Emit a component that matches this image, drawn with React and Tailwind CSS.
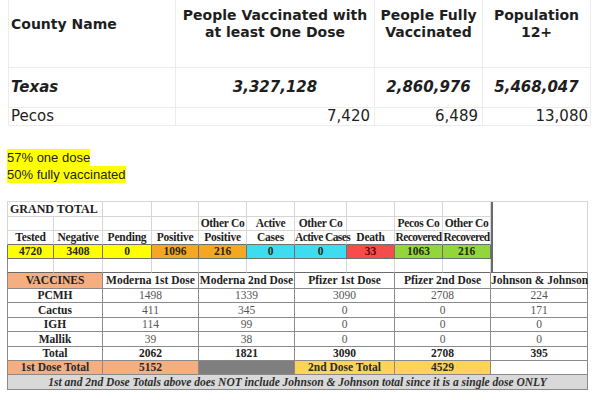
import React from "react";

const light = "border-r border-b border-[#d6d6d6]";
const dark = "border-r border-b border-[#707070]";
const vac = "border-r border-b border-[#8a8a8a]";

const statHeads = [
    ["", "Tested"],
    ["", "Negative"],
    ["", "Pending"],
    ["", "Positive"],
    ["Other Co", "Positive"],
    ["Active", "Cases"],
    ["Other Co", "Active Cases"],
    ["", "Death"],
    ["Pecos Co", "Recovered"],
    ["Other Co", "Recovered"],
];

const statValues = [
    { value: "4720", bg: "bg-[#ffff00]" },
    { value: "3408", bg: "bg-[#ffff00]" },
    { value: "0", bg: "bg-[#ffff00]" },
    { value: "1096", bg: "bg-[#f5a623]" },
    { value: "216", bg: "bg-[#f5a623]" },
    { value: "0", bg: "bg-[#3ddcf0]" },
    { value: "0", bg: "bg-[#3ddcf0]" },
    { value: "33", bg: "bg-[#f64c4c]" },
    { value: "1063", bg: "bg-[#92d63c]" },
    { value: "216", bg: "bg-[#92d63c]" },
];

const vaccineRows = [
    ["PCMH", "1498", "1339", "3090", "2708", "224"],
    ["Cactus", "411", "345", "0", "0", "171"],
    ["IGH", "114", "99", "0", "0", "0"],
    ["Mallik", "39", "38", "0", "0", "0"],
];

const colWidths = [47, 49, 49, 47, 48, 48, 52, 48, 48, 48, 48, 49];

const App = () => {
    return (
        <div className="w-[595px] h-[400px] bg-white overflow-hidden text-[#1e1e1e]">
            {/* county summary */}
            <table className="ml-[8px] w-[582px] table-fixed border-collapse font-['DejaVu_Sans',sans-serif]">
                <colgroup>
                    <col className="w-[167px]" />
                    <col className="w-[199px]" />
                    <col className="w-[108px]" />
                    <col className="w-[108px]" />
                </colgroup>
                <tbody>
                    <tr className="h-[67px]">
                        <td className="align-top pt-[16px] pl-[2px] text-[14px] leading-[17px] font-bold border border-t-0 border-[#ececec]">
                            County Name
                        </td>
                        <td className="align-top pt-[7px] text-center text-[14px] leading-[17px] font-bold border border-t-0 border-[#ececec]">
                            People Vaccinated with
                            <br />
                            at least One Dose
                        </td>
                        <td className="align-top pt-[7px] text-center text-[14px] leading-[17px] font-bold border border-t-0 border-[#ececec]">
                            People Fully
                            <br />
                            Vaccinated
                        </td>
                        <td className="align-top pt-[7px] text-center text-[14px] leading-[17px] font-bold border border-t-0 border-[#ececec]">
                            Population
                            <br />
                            12+
                        </td>
                    </tr>
                    <tr className="h-[40px] text-[15px] font-bold italic">
                        <td className="pl-[2px] border border-[#ececec]">Texas</td>
                        <td className="text-center border border-[#ececec]">3,327,128</td>
                        <td className="text-center border border-[#ececec]">2,860,976</td>
                        <td className="text-center border border-[#ececec]">5,468,047</td>
                    </tr>
                    <tr className="h-[18px] text-[15px] leading-[17px]">
                        <td className="pl-[2px] border border-[#ececec]">Pecos</td>
                        <td className="text-right pr-[4px] border border-[#ececec]">7,420</td>
                        <td className="text-right pr-[4px] border border-[#ececec]">6,489</td>
                        <td className="text-right pr-[2px] border border-[#ececec]">13,080</td>
                    </tr>
                </tbody>
            </table>

            <div className="mt-[23px] ml-[7px] font-['Liberation_Sans',sans-serif] text-[13px] leading-[17px] text-[#222]">
                <div className="w-fit bg-[#ffff00]">57% one dose</div>
                <div className="w-fit bg-[#ffff00]">50% fully vaccinated</div>
            </div>

            {/* grand total + vaccines sheet */}
            <table className="mt-[18px] ml-[7px] w-[581px] table-fixed border-separate border-spacing-0 border-t border-[#d6d6d6] font-['Liberation_Serif',serif] text-[11.5px] leading-[12px] font-bold text-center">
                <colgroup>
                    {colWidths.map((w, i) => (
                        <col key={i} style={{ width: w }} />
                    ))}
                </colgroup>
                <tbody>
                    <tr className="h-[15px]">
                        <td colSpan={2} className={`${light} border-l text-left pl-[2px] text-[12px]`}>
                            GRAND TOTAL
                        </td>
                        {Array.from({ length: 8 }).map((_, i) => (
                            <td key={i} className={light}></td>
                        ))}
                        <td
                            colSpan={2}
                            rowSpan={5}
                            className="border-l-2 border-l-[#6a6a6a] border-r border-r-[#d6d6d6] border-b border-b-[#6a6a6a]"
                        ></td>
                    </tr>
                    <tr className="h-[14px]">
                        {statHeads.map((h, i) => (
                            <td key={i} className={`${light} ${i === 0 ? "border-l" : ""} whitespace-nowrap tracking-[-0.3px]`}>
                                {h[0]}
                            </td>
                        ))}
                    </tr>
                    <tr className="h-[14px]">
                        {statHeads.map((h, i) => (
                            <td
                                key={i}
                                className={`border-r border-r-[#d6d6d6] border-b border-b-[#707070] ${i === 0 ? "border-l border-l-[#d6d6d6]" : ""} whitespace-nowrap ${i === 6 || i > 7 ? "tracking-[-0.6px]" : "tracking-[-0.2px]"}`}
                            >
                                {h[1]}
                            </td>
                        ))}
                    </tr>
                    <tr className="h-[14px]">
                        {statValues.map((s, i) => (
                            <td
                                key={i}
                                className={`${dark} ${s.bg} ${i === 0 ? "border-l" : ""} ${i === 7 ? "text-[#5a0808]" : "text-[#2a2a10]"}`}
                            >
                                {s.value}
                            </td>
                        ))}
                    </tr>
                    <tr className="h-[14px]">
                        {Array.from({ length: 10 }).map((_, i) => (
                            <td
                                key={i}
                                className={`border-r border-r-[#d6d6d6] border-b border-b-[#6a6a6a] ${i === 0 ? "border-l border-l-[#8a8a8a]" : ""}`}
                            ></td>
                        ))}
                    </tr>

                    <tr className="h-[16px]">
                        <td colSpan={2} className={`${vac} border-l bg-[#f4ae80]`}>VACCINES</td>
                        <td colSpan={2} className={vac}>Moderna 1st Dose</td>
                        <td colSpan={2} className={vac}>Moderna 2nd Dose</td>
                        <td colSpan={2} className={vac}>Pfizer 1st Dose</td>
                        <td colSpan={2} className={vac}>Pfizer 2nd Dose</td>
                        <td colSpan={2} className={`${vac} whitespace-nowrap`}>Johnson &amp; Johnson</td>
                    </tr>
                    {vaccineRows.map((row) => (
                        <tr key={row[0]} className="h-[14.5px]">
                            {row.map((cell, i) => (
                                <td
                                    key={i}
                                    colSpan={2}
                                    className={`${vac} ${i === 0 ? "border-l text-[#222]" : "font-normal text-[#555]"}`}
                                >
                                    {cell}
                                </td>
                            ))}
                        </tr>
                    ))}
                    <tr className="h-[14px]">
                        {["Total", "2062", "1821", "3090", "2708", "395"].map((cell, i) => (
                            <td key={i} colSpan={2} className={`${vac} ${i === 0 ? "border-l" : ""} text-[#222]`}>
                                {cell}
                            </td>
                        ))}
                    </tr>
                    <tr className="h-[14px] text-[#2a2a2a]">
                        <td colSpan={2} className={`${vac} border-l bg-[#f4ae80]`}>1st Dose Total</td>
                        <td colSpan={2} className={`${vac} bg-[#f4ae80]`}>5152</td>
                        <td colSpan={2} className={`${vac} bg-[#7f7f7f]`}></td>
                        <td colSpan={2} className={`${vac} bg-[#fdd35c]`}>2nd Dose Total</td>
                        <td colSpan={2} className={`${vac} bg-[#fdd35c]`}>4529</td>
                        <td colSpan={2} className={vac}></td>
                    </tr>
                    <tr className="h-[15px]">
                        <td
                            colSpan={12}
                            className={`${vac} border-l bg-[#d9d9d9] italic text-[#2e2e2e] whitespace-nowrap`}
                        >
                            1st and 2nd Dose Totals above does NOT include Johnson &amp; Johnson total since it is a single dose ONLY
                        </td>
                    </tr>
                </tbody>
            </table>
        </div>
    );
};

export default App;
